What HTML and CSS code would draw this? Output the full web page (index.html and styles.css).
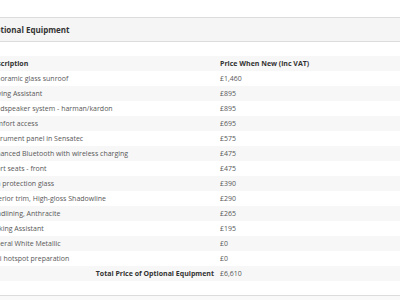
FILE: index.html
```
<!DOCTYPE html>
<html>
<head>
<meta charset="utf-8">
<link rel="stylesheet" href="styles.css">
</head>
<body>
<div class="page">
  <div class="panel-head">Optional Equipment</div>
  <table class="equip">
    <thead>
      <tr><th class="desc">Description</th><th class="price">Price When New (inc VAT)</th></tr>
    </thead>
    <tbody>
      <tr><td class="desc">Panoramic glass sunroof</td><td class="price">£1,460</td></tr>
      <tr><td class="desc">Driving Assistant</td><td class="price">£895</td></tr>
      <tr><td class="desc">Loudspeaker system - harman/kardon</td><td class="price">£895</td></tr>
      <tr><td class="desc">Comfort access</td><td class="price">£695</td></tr>
      <tr><td class="desc">Instrument panel in Sensatec</td><td class="price">£575</td></tr>
      <tr><td class="desc">Enhanced Bluetooth with wireless charging</td><td class="price">£475</td></tr>
      <tr><td class="desc">Sport seats - front</td><td class="price">£475</td></tr>
      <tr><td class="desc">Sun protection glass</td><td class="price">£390</td></tr>
      <tr><td class="desc">Exterior trim, High-gloss Shadowline</td><td class="price">£290</td></tr>
      <tr><td class="desc">Headlining, Anthracite</td><td class="price">£265</td></tr>
      <tr><td class="desc">Parking Assistant</td><td class="price">£195</td></tr>
      <tr><td class="desc">Mineral White Metallic</td><td class="price">£0</td></tr>
      <tr><td class="desc">WiFi hotspot preparation</td><td class="price">£0</td></tr>
      <tr class="total"><td class="desc">Total Price of Optional Equipment</td><td class="price">£6,610</td></tr>
    </tbody>
  </table>
  <div class="next"></div>
</div>
</body>
</html>
```
FILE: styles.css
```
html, body {
  margin: 0;
  padding: 0;
  background: #fff;
}
body {
  font-family: "Open Sans", "Liberation Sans", sans-serif;
  color: #585858;
  overflow: hidden;
  width: 400px;
  height: 300px;
}
.page {
  padding-top: 17px;
  margin-left: -16px;
  width: 416px;
}
.panel-head {
  height: 23px;
  line-height: 23px;
  border-top: 1px solid #dcdcdc;
  border-bottom: 1px solid #dcdcdc;
  background: #f5f5f5;
  font-size: 8px;
  font-weight: 700;
  color: #333;
  padding-left: 5px;
}
.equip {
  margin-top: 14px;
  width: 100%;
  border-collapse: collapse;
  font-size: 7px;
}
.equip th, .equip td {
  height: 15px;
  line-height: 15px;
  padding: 0 4px;
  text-align: left;
  white-space: nowrap;
}
.equip th {
  font-weight: 700;
  color: #333;
}
.equip .desc {
  width: 224px;
}
.equip thead tr,
.equip tbody tr:nth-child(even) {
  background: #f7f7f7;
}
.equip .total .desc {
  text-align: right;
  font-weight: 700;
  color: #333;
  padding-right: 2px;
  padding-left: 6px;
}
.next {
  margin-top: 14px;
  height: 10px;
  border-top: 1px solid #dcdcdc;
  background: #f9f9f9;
}
```
